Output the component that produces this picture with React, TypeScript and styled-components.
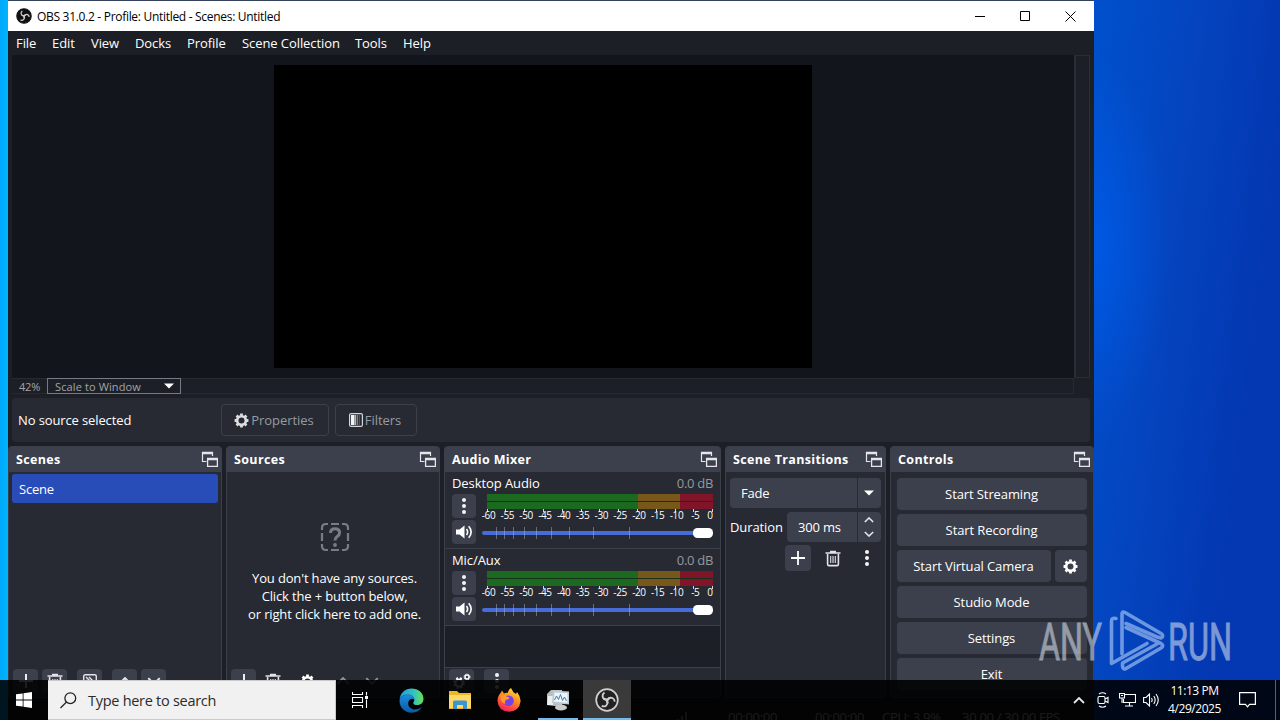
import * as React from "react";
import styled, { createGlobalStyle } from 'styled-components'

const windowBg = '#1d1f26'
const panelBg = '#272a33'
const raisedBg = '#3c404d'
const uiFont = `"Open Sans", "Noto Sans", sans-serif`

const GlobalStyle = createGlobalStyle`
  * {
    box-sizing: border-box;
  }
  body {
    margin: 0;
    overflow: hidden;
    font-family: ${uiFont};
  }
  svg {
    display: block;
    flex: none;
  }
`

const Desktop = styled.div`
  position: relative;
  width: 1280px;
  height: 720px;
  overflow: hidden;
  background:
    linear-gradient(90deg, #00a9fb 0, #00b4ff 8px, transparent 8px),
    radial-gradient(ellipse 80px 190px at 1090px 245px, rgba(0, 92, 235, 0.8), transparent),
    linear-gradient(97deg, #0050cc 0, #0050cc 1090px, #0444be 1190px, #0338b2 1285px);
`

const AppWindow = styled.div`
  position: absolute;
  left: 8px;
  top: 0;
  width: 1086px;
  height: 740px;
  display: flex;
  flex-direction: column;
  color: #fff;
  font-size: 13px;
  background: ${windowBg};
  border-top: 1px solid #33415c;
`

const TitleBar = styled.div`
  display: flex;
  align-items: center;
  height: 30px;
  flex: none;
  padding: 0 1px 0 8px;
  background: #fff;
  color: #000;
`

const TitleText = styled.div`
  flex: 1;
  margin-left: 5px;
  font-size: 12px;
  letter-spacing: -0.3px;
  white-space: nowrap;
`

const WindowButton = styled.div`
  width: 45.3px;
  display: flex;
  justify-content: center;
`

const MenuBar = styled.div`
  display: flex;
  align-items: center;
  height: 24px;
  flex: none;
`

const MenuItem = styled.div<{ $width: number }>`
  width: ${p => p.$width}px;
  padding-left: 8px;
  letter-spacing: -0.08px;
  white-space: nowrap;
`

const Preview = styled.div`
  display: grid;
  grid-template-columns: 1062px 16px;
  grid-template-rows: 323px 16px;
  margin: 0 4px;
  flex: none;
`

const Canvas = styled.div`
  background: #13151c;
  padding: 10px 0 0 262px;
`

const Screen = styled.div`
  width: 538px;
  height: 303px;
  background: #000;
`

const VerticalScroll = styled.div`
  border: 1px solid #2a2d36;
  border-left-width: 2px;
`

const ZoomRow = styled.div`
  display: flex;
  align-items: center;
  color: #a3a5ab;
  font-size: 11px;
  border: 1px solid #272a31;
  border-left: 0;
`

const ZoomLevel = styled.div`
  width: 35px;
  padding-left: 7px;
  letter-spacing: -0.2px;
`

const ZoomSelect = styled.div`
  display: flex;
  align-items: center;
  justify-content: space-between;
  width: 134px;
  height: 16px;
  padding: 0 6px 0 7px;
  border: 1px solid #777a82;
  letter-spacing: 0.12px;
`

const ContextBar = styled.div`
  display: flex;
  align-items: center;
  gap: 6px;
  height: 44px;
  flex: none;
  margin: 4px 4px 4px;
  padding-left: 6px;
  background: ${panelBg};
  border-radius: 4px;
`

const ContextLabel = styled.div`
  width: 197px;
  letter-spacing: -0.12px;
`

const ContextButton = styled.div<{ $width: number }>`
  display: flex;
  align-items: center;
  justify-content: center;
  gap: 2px;
  width: ${p => p.$width}px;
  height: 32px;
  padding-right: 2px;
  color: #989aa1;
  letter-spacing: -0.05px;
  border: 1px solid #3c404b;
  border-radius: 4px;
`

const Docks = styled.div`
  display: grid;
  grid-template-columns: 214px 214px 277px 161px 204px;
  gap: 4px;
  height: 252px;
  flex: none;
`

const DockFrame = styled.div`
  display: flex;
  flex-direction: column;
  min-width: 0;
  background: ${panelBg};
  border: 1px solid #3c404b;
  border-top: 0;
  border-radius: 4px;
`

const DockHeader = styled.div`
  display: flex;
  align-items: center;
  justify-content: space-between;
  height: 26px;
  flex: none;
  padding: 0 3px 0 7px;
  font-weight: 700;
  font-size: 12.5px;
  letter-spacing: 0.35px;
  background: ${raisedBg};
  border-radius: 4px 4px 0 0;
`

const DockBody = styled.div`
  flex: 1;
  display: flex;
  flex-direction: column;
  min-height: 0;
`

const SceneItem = styled.div`
  height: 29px;
  margin: 2px 3px 0;
  padding: 0 7px;
  line-height: 30px;
  letter-spacing: -0.2px;
  background: #284cb8;
  border-radius: 3px;
`

const EmptySources = styled.div`
  flex: 1;
  display: flex;
  flex-direction: column;
  align-items: center;
  padding: 50px 0 0 3px;
  line-height: 18px;
  letter-spacing: -0.15px;
  text-align: center;
  white-space: nowrap;

  svg {
    margin-bottom: 17px;
  }
`

const DockToolbar = styled.div`
  display: flex;
  height: 28px;
  margin-top: auto;
  padding-left: 4px;
`

const ToolButton = styled.div<{ $gap?: number, $flat?: boolean, $dim?: boolean }>`
  display: flex;
  align-items: center;
  justify-content: center;
  width: 25px;
  height: 24px;
  margin-left: ${p => p.$gap ?? 0}px;
  border-radius: 4px;
  background: ${p => p.$flat ? 'transparent' : raisedBg};
  opacity: ${p => p.$dim ? 0.55 : 1};
`

const Channel = styled.div`
  height: 77px;
  flex: none;
  padding: 1px 7px 0;
  border-bottom: 1px solid #3c404b;
`

const ChannelTitle = styled.div`
  display: flex;
  justify-content: space-between;
  height: 21px;
  line-height: 21px;
  letter-spacing: -0.08px;
`

const Muted = styled.span`
  color: #96989e;
  letter-spacing: -0.3px;
`

const ChannelRow = styled.div`
  display: flex;
  gap: 6px;
`

const ChannelButtons = styled.div`
  display: flex;
  flex-direction: column;
  gap: 2px;
`

const SquareButton = styled.div<{ $size?: number }>`
  display: flex;
  align-items: center;
  justify-content: center;
  width: ${p => p.$size ?? 24}px;
  height: ${p => p.$size ?? 24}px;
  background: ${raisedBg};
  border-radius: 4px;
`

const MixerGap = styled.div`
  height: 42px;
  flex: none;
  background: ${windowBg};
  border-bottom: 1px solid #3c404b;
`

const Transitions = styled.div`
  display: flex;
  flex-direction: column;
  gap: 4px;
  padding: 6px 4px 0;
`

const Field = styled.div<{ $width?: number }>`
  display: flex;
  align-items: center;
  width: ${p => p.$width ?? 151}px;
  height: 30px;
  padding-left: 11px;
  background: ${raisedBg};
  border-radius: 4px;
`

const FieldValue = styled.div`
  flex: 1;
  letter-spacing: -0.2px;
  white-space: nowrap;
`

const FieldEnd = styled.div`
  display: flex;
  flex-direction: column;
  align-items: center;
  justify-content: center;
  gap: 8px;
  width: 24px;
  height: 30px;
  padding-right: 1px;
  border-left: 1px solid ${panelBg};
`

const DurationRow = styled.div`
  display: flex;
  align-items: center;
  justify-content: space-between;
  width: 151px;
  letter-spacing: -0.1px;
`

const TransitionTools = styled.div`
  display: flex;
  align-items: center;
  padding-left: 55px;
  margin-top: -1px;
`

const ControlList = styled.div`
  display: flex;
  flex-direction: column;
  gap: 4px;
  padding: 6px 6px 0;
`

const ControlRow = styled.div`
  display: flex;
  gap: 4px;
`

const ControlButton = styled.div<{ $width?: number }>`
  display: flex;
  align-items: center;
  justify-content: center;
  width: ${p => p.$width ?? 190}px;
  height: 32px;
  padding-right: 1px;
  letter-spacing: -0.1px;
  background: ${raisedBg};
  border-radius: 4px;
`

const StatusBar = styled.div`
  display: flex;
  align-items: center;
  height: 38px;
  flex: none;
  padding-left: 668px;
  color: #d0d0d0;
  letter-spacing: -0.3px;
  white-space: nowrap;
`

const StatusItem = styled.div<{ $width: number }>`
  width: ${p => p.$width}px;
  flex: none;
`

const Watermark = styled.div`
  position: absolute;
  left: 1036px;
  top: 606px;
`

const Taskbar = styled.div`
  position: absolute;
  left: 0;
  bottom: 0;
  width: 1280px;
  height: 40px;
  display: flex;
  align-items: stretch;
  color: #fff;
  background: rgba(0, 0, 0, 0.88);
`

const StartButton = styled.div`
  width: 48px;
  display: flex;
  align-items: center;
  justify-content: center;
`

const SearchBox = styled.div`
  display: flex;
  align-items: center;
  gap: 11px;
  width: 288px;
  padding-left: 12px;
  color: #2b2b2b;
  font-size: 14.5px;
  letter-spacing: -0.28px;
  background: #f1f1f1;
  border: 1px solid #c9c9c9;
  border-left: 0;
`

const TaskItem = styled.div<{ $state?: 'open' | 'active' }>`
  display: flex;
  align-items: center;
  justify-content: center;
  width: 48px;
  margin-right: 1px;
  background: ${p => p.$state === 'active' ? '#3a3a3a' : 'transparent'};
  background-image: ${p => p.$state ? 'linear-gradient(#76b9ed, #76b9ed)' : 'none'};
  background-size: ${p => p.$state === 'active' ? '48px' : '40px'} 2px;
  background-position: bottom center;
  background-repeat: no-repeat;

  &:nth-child(3) {
    margin-right: 3px;
  }
`

const Tray = styled.div`
  display: flex;
  align-items: center;
  margin-left: auto;
`

const TrayCell = styled.div<{ $width: number }>`
  display: flex;
  justify-content: center;
  width: ${p => p.$width}px;
`

const Clock = styled.div`
  width: 63px;
  font-size: 12px;
  line-height: 18px;
  letter-spacing: -0.45px;
  text-align: center;
  white-space: nowrap;
`

const ShowDesktop = styled.div`
  width: 5px;
  height: 40px;
  margin-left: 7px;
  border-left: 1px solid #5b6070;
`

function ObsLogo({ size, ring, fill }: { size: number, ring: string, fill: string }) {
  return (
    <svg width={size} height={size} viewBox="0 0 24 24" fill="none">
      <circle cx="12" cy="12" r="10.8" fill={fill} stroke={ring} strokeWidth="1.7" />
      {[0, 120, 240].map(a => (
        <path key={a} transform={`rotate(${a} 12 12)`} d="M9.500 4.500C6.600 6.600 7 10.300 10.200 11.300C12 11.900 13.800 11 14.600 9.300" stroke="#cfcfcf" strokeWidth="1.9" />
      ))}
    </svg>
  )
}

function PopoutIcon() {
  return (
    <svg width="17" height="17" fill="none" stroke="#e6e6ea">
      <path d="M5.500 10.5H1.5V1M11.500 1V5" strokeWidth="1.2" />
      <path d="M1 2H12M6 8H17" strokeWidth="2.4" />
      <path d="M6.6 7V15.4H16.4V7" strokeWidth="1.3" />
    </svg>
  )
}

function GearIcon({ size = 15, color = '#fff' }: { size?: number, color?: string }) {
  return (
    <svg width={size} height={size} viewBox="0 0 16 16" fill="none" stroke={color}>
      <circle cx="8" cy="8" r="4.6" strokeWidth="2.8" />
      {[0, 45, 90, 135].map(a => (
        <path key={a} transform={`rotate(${a} 8 8)`} d="M8 .6V3M8 13V15.4" strokeWidth="3" />
      ))}
    </svg>
  )
}

function FilterIcon() {
  return (
    <svg width="14" height="14" fill="none">
      <rect x=".6" y=".6" width="12.8" height="12.8" rx="1.5" stroke="#d5d6da" strokeWidth="1.2" />
      <path d="M2 2H5.5V12H2Z" fill="#f4f4f4" />
      <path d="M6.5 2V12" stroke="#b9bac0" strokeWidth="1.4" />
      <path d="M8.5 2V12" stroke="#85878f" strokeWidth="1.2" />
      <path d="M10.5 2V12" stroke="#555863" />
    </svg>
  )
}

function TrashIcon() {
  return (
    <svg width="16" height="17" fill="none" stroke="#e3e3e8">
      <path d="M.5 3H15.5M5 1.5H11" strokeWidth="1.7" />
      <path d="M2.6 4V14.2Q2.6 15.6 4 15.6H12Q13.4 15.6 13.4 14.2V4" strokeWidth="1.6" />
      <path d="M5.7 6V13M8 6V13M10.3 6V13" strokeWidth="1.1" />
    </svg>
  )
}

function DotsIcon() {
  return (
    <svg width="4" height="16" fill="#f4f4f4">
      <circle cx="2" cy="2" r="2" />
      <circle cx="2" cy="8" r="2" />
      <circle cx="2" cy="14" r="2" />
    </svg>
  )
}

function PlusIcon() {
  return (
    <svg width="14" height="14" stroke="#fff" strokeWidth="1.8">
      <path d="M7 0V14M0 7H14" />
    </svg>
  )
}

function Chevron({ up, width = 10 }: { up?: boolean, width?: number }) {
  return (
    <svg width={width} height={width / 2 + 1} viewBox="0 0 12 7" fill="none" stroke="#e8e8ec" strokeWidth="1.8">
      <path d={up ? 'M1 6L6 1L11 6' : 'M1 1L6 6L11 1'} />
    </svg>
  )
}

function Arrow() {
  return (
    <svg width="10" height="6" fill="#fff"><path d="M0 .5H10L5 5.5Z" /></svg>
  )
}

function SceneFilterIcon() {
  return (
    <svg width="14" height="14" fill="none" stroke="#e4e4e8" strokeWidth="1.4">
      <rect x=".7" y=".7" width="12.6" height="12.6" rx="1.5" />
      <path d="M3 3L11 11M3 6L8 11M6 3L11 8" />
    </svg>
  )
}

function SpeakerIcon() {
  return (
    <svg width="17" height="14" fill="none">
      <path d="M0 4.5H3.5L8.5 .5V13.5L3.5 9.5H0Z" fill="#fff" />
      <path d="M10.5 4Q12.8 7 10.5 10M12.7 1.3Q17.6 7 12.7 12.7" stroke="#fff" strokeWidth="1.6" />
    </svg>
  )
}

function MissingIcon() {
  return (
    <svg width="30" height="30" fill="none" stroke="#7a7c83" strokeWidth="2.2">
      <path d="M2 8V6Q2 2 6 2H8M11 2H19M22 2H24Q28 2 28 6V8M28 11V19M28 22V24Q28 28 24 28H22M19 28H11M8 28H6Q2 28 2 24V22M2 19V11" />
      <path d="M10.5 11Q10.5 6.8 15 6.8Q19.6 6.8 19.6 10.8Q19.6 13 17.2 14.6Q15 16 15 18.6" strokeWidth="3" />
      <circle cx="15" cy="23" r="1" strokeWidth="1.8" />
    </svg>
  )
}

const levels = [-60, -55, -50, -45, -40, -35, -30, -25, -20, -15, -10, -5, 0]
const notches = [14.5, 22.5, 31.5, 42.5, 54.5, 69.5, 87.5, 111.5, 147.5]

// level meter with its dB scale, and the volume fader under it
function Meter() {
  return (
    <svg width="233" height="50" fontFamily="Open Sans" fontSize="10" fill="#fff">
      <rect x="5" y="0" width="151" height="15" fill="#1b6a20" />
      <rect x="156" y="0" width="42" height="15" fill="#78581a" />
      <rect x="198" y="0" width="33" height="15" fill="#80152a" />
      <path d="M5 7.5H231" stroke="#16301c" />
      {levels.map((db, i) => {
        const x = 5.5 + i * 18.8
        return (
          <g key={db}>
            <path d={`M${Math.round(x) - .5} 15V18`} stroke="#d5d5d8" />
            <text x={db === 0 ? 228 : x + 1} y="25" textAnchor="middle" letterSpacing="-.4">{db}</text>
          </g>
        )
      })}
      <rect x="0" y="37" width="225" height="4" rx="2" fill="#476bd7" />
      {notches.map(x => <path key={x} d={`M${x} 33V45`} stroke="#a9b0c4" strokeOpacity=".5" />)}
      <rect x="211" y="34" width="20" height="10" rx="4.5" />
    </svg>
  )
}

function Dock({ title, children }: { title: string, children?: React.ReactNode }) {
  return (
    <DockFrame>
      <DockHeader>{title}<PopoutIcon /></DockHeader>
      <DockBody>{children}</DockBody>
    </DockFrame>
  )
}

function MixerChannel({ name }: { name: string }) {
  return (
    <Channel>
      <ChannelTitle><span>{name}</span><Muted>0.0 dB</Muted></ChannelTitle>
      <ChannelRow>
        <ChannelButtons>
          <SquareButton><DotsIcon /></SquareButton>
          <SquareButton><SpeakerIcon /></SquareButton>
        </ChannelButtons>
        <Meter />
      </ChannelRow>
    </Channel>
  )
}

function AnyRunLogo() {
  return (
    <Watermark>
      <svg width="200" height="70" fill="none" opacity=".55">
        <g fill="#dfe6f2" stroke="#dfe6f2" strokeWidth=".9" fontFamily="Roboto" fontSize="52">
          <text x="3" y="53.500" textLength="63" lengthAdjust="spacingAndGlyphs">ANY</text>
          <text x="132" y="53.500" textLength="64" lengthAdjust="spacingAndGlyphs">RUN</text>
        </g>
        <g stroke="#c4dcff" strokeWidth="3.600" strokeLinejoin="round" strokeLinecap="round">
          <path d="M80 12.5Q75.5 11.5 75.5 15V57.5L111 37.5" />
          <path d="M86 48V8Q86 5 89 6.5L125 27.5Q128.500 30 125 32L121 31L90 17.500" />
          <path d="M90 21.500L125 37.500Q128.500 39.500 125 42L90 62.500Q86.500 64 86.500 60V57L121 38" />
        </g>
      </svg>
    </Watermark>
  )
}

function EdgeIcon() {
  return (
    <svg width="25" height="25" viewBox="0 0 24 24">
      <defs>
        <linearGradient id="edgeTop" x1="0" x2="1"><stop stopColor="#1b9de2" /><stop offset=".6" stopColor="#35c1c0" /><stop offset="1" stopColor="#6be34c" /></linearGradient>
        <linearGradient id="edgeLow" x1="0" x2="0" y2="1"><stop stopColor="#1c8bdc" /><stop offset="1" stopColor="#0c59a4" /></linearGradient>
      </defs>
      <path d="M.6 11C1.300 4.500 6 .5 12 .5C18.600 .5 23.500 5 23.500 10.500C23.500 14 20.800 16.300 17.500 16.300C15 16.300 13.700 15.300 13.700 14.300C13.700 13.500 14.700 13.200 14.700 11.300C14.700 8.500 12 6.500 8.500 6.500C4.500 6.500 1.600 8.500 .6 11Z" fill="url(#edgeTop)" />
      <path d="M.5 12.500C.5 9 4 6.500 8.500 6.500C12 6.500 14.700 8.500 14.700 11C12.500 9.500 8.800 11 8.800 14.800C8.800 18.500 12.500 21 16.500 20.500C18.800 20.300 20.500 19.200 21.800 18.500C19.500 22.200 16 23.700 12 23.700C5.300 23.700 .5 18.500 .5 12.500Z" fill="url(#edgeLow)" />
    </svg>
  )
}

function ExplorerIcon() {
  return (
    <svg width="22" height="18">
      <path d="M0 0H8L10 2H22V18H0Z" fill="#f0b429" />
      <path d="M0 4H22V17H0Z" fill="#ffd867" />
      <path d="M4 18V11Q4 9.500 5.500 9.500H16.500Q18 9.500 18 11V18H14V14H8V18Z" fill="#3a96cf" />
    </svg>
  )
}

function FirefoxIcon() {
  return (
    <svg width="24" height="24">
      <defs>
        <linearGradient id="fox" x1=".8" y1="0" x2=".3" y2="1"><stop stopColor="#ffe33f" /><stop offset=".45" stopColor="#ff8b21" /><stop offset="1" stopColor="#f5185e" /></linearGradient>
      </defs>
      <path d="M4 4.500L5 2.500L7 5.500Q9 4.500 10.500 5Q12 1 14 0Q15.500 4 19 6L20 4Q24 9 23.500 13.500Q22.500 23 12 23.800Q1 23 .5 12.500Q.5 8 4 4.500Z" fill="url(#fox)" />
      <circle cx="11.500" cy="12.800" r="5.300" fill="#7542e5" />
      <path d="M3.500 7.500Q7 6 9.500 8.500L12.500 9.500Q11.500 12 9 11.800Q7 13.500 8.500 16Q3.500 15 3.500 7.500Z" fill="#ff9a26" />
    </svg>
  )
}

function MonitorIcon() {
  return (
    <svg width="24" height="22">
      <path d="M1 5L5 1H16V18L1 16Z" fill="#b8bfc2" />
      <path d="M2 7H7V16H1Z" fill="#eceff0" />
      <path d="M7 1.500L23 2.500V15.500L6 14Z" fill="#c3cacd" />
      <path d="M8.500 3.500L21.500 4.300V13.700L8 12.600Z" fill="#eef6fc" />
      <path d="M8.500 11L10.500 7L12.500 10.500L14.500 5.500L16.500 11.500L18.500 8L20.500 12" stroke="#397eb0" fill="none" />
      <ellipse cx="15" cy="18.500" rx="6" ry="3" fill="#c9cdd0" />
    </svg>
  )
}

function WindowsLogo() {
  return (
    <svg width="16" height="16" fill="#fff">
      <path d="M0 2.300L6.700 1.400V7.600H0ZM7.500 1.200L16 0V7.600H7.500ZM0 8.400H6.700V14.600L0 13.700ZM7.500 8.400H16V16L7.500 14.800Z" />
    </svg>
  )
}

function SearchIcon() {
  return (
    <svg width="17" height="17" fill="none" stroke="#222" strokeWidth="1.300">
      <circle cx="10.300" cy="6.200" r="5.400" />
      <path d="M6.500 10L.5 16" />
    </svg>
  )
}

function TaskViewIcon() {
  return (
    <svg width="17" height="16" fill="none" stroke="#fff" strokeWidth="1.100">
      <path d="M.5 0V2.500H10.500V0M.5 16V13.500H10.500V16M.5 5.500H10.500V10.500H.5ZM14.500 0V3.500M14.500 7.500V16" />
      <path d="M13 4H16V7H13Z" fill="#fff" stroke="none" />
    </svg>
  )
}

function CameraTrayIcon() {
  return (
    <svg width="12" height="16" fill="none" stroke="#fff" strokeWidth="1.100">
      <rect x="1" y="4.500" width="7" height="7" rx="1.500" />
      <path d="M8 7L11 5.500V10.500L8 9M2 2Q5.500 -.5 9 2M2 14Q5.500 16.500 9 14" />
    </svg>
  )
}

function NetworkIcon() {
  return (
    <svg width="17" height="14" fill="none" stroke="#fff" strokeWidth="1.100">
      <path d="M6 1.500H16.500V9.500H4.500V6M10.500 9.500V13M6 13H14M.5 .5H5.500V5H.5ZM2 2.500H4M3 5V10" />
    </svg>
  )
}

function VolumeTrayIcon() {
  return (
    <svg width="17" height="14" fill="none" stroke="#fff" strokeWidth="1.100">
      <path d="M.6 4.500H3L6.500 1V13L3 9.500H.6ZM8.500 5Q9.800 7 8.500 9M10.800 3Q13.500 7 10.800 11M13 1Q17.500 7 13 13" />
    </svg>
  )
}

const menu: [string, number][] = [
  ['File', 36], ['Edit', 39], ['View', 44], ['Docks', 52],
  ['Profile', 55], ['Scene Collection', 113], ['Tools', 48], ['Help', 44],
]

export default function App() {
  return (
    <Desktop>
      <GlobalStyle />
      <AppWindow>
        <TitleBar>
          <ObsLogo size={16} ring="#111" fill="#111" />
          <TitleText>OBS 31.0.2 - Profile: Untitled - Scenes: Untitled</TitleText>
          <WindowButton><svg width="10" height="10" stroke="#000"><path d="M0 5.500H10" /></svg></WindowButton>
          <WindowButton><svg width="10" height="10" stroke="#000" fill="none"><path d="M.5 .5H9.500V9.500H.5Z" /></svg></WindowButton>
          <WindowButton><svg width="11" height="11" stroke="#000"><path d="M.5 .5L10.500 10.500M10.500 .5L.5 10.500" /></svg></WindowButton>
        </TitleBar>
        <MenuBar>
          {menu.map(([label, width]) => <MenuItem key={label} $width={width}>{label}</MenuItem>)}
        </MenuBar>
        <Preview>
          <Canvas><Screen /></Canvas>
          <VerticalScroll />
          <ZoomRow>
            <ZoomLevel>42%</ZoomLevel>
            <ZoomSelect>Scale to Window<Arrow /></ZoomSelect>
          </ZoomRow>
        </Preview>
        <ContextBar>
          <ContextLabel>No source selected</ContextLabel>
          <ContextButton $width={108}><GearIcon color="#dcdde0" />Properties</ContextButton>
          <ContextButton $width={82}><FilterIcon />Filters</ContextButton>
        </ContextBar>
        <Docks>
          <Dock title="Scenes">
            <SceneItem>Scene</SceneItem>
            <DockToolbar>
              <ToolButton><PlusIcon /></ToolButton>
              <ToolButton $gap={4}><TrashIcon /></ToolButton>
              <ToolButton $gap={10}><SceneFilterIcon /></ToolButton>
              <ToolButton $gap={10}><Chevron up width={14} /></ToolButton>
              <ToolButton $gap={4}><Chevron width={14} /></ToolButton>
            </DockToolbar>
          </Dock>
          <Dock title="Sources">
            <EmptySources>
              <MissingIcon />
              <div>You don't have any sources.</div>
              <div>Click the + button below,</div>
              <div>or right click here to add one.</div>
            </EmptySources>
            <DockToolbar>
              <ToolButton><PlusIcon /></ToolButton>
              <ToolButton $gap={4} $flat><TrashIcon /></ToolButton>
              <ToolButton $gap={10} $flat><GearIcon /></ToolButton>
              <ToolButton $gap={10} $flat $dim><Chevron up width={14} /></ToolButton>
              <ToolButton $gap={4} $flat $dim><Chevron width={14} /></ToolButton>
            </DockToolbar>
          </Dock>
          <Dock title="Audio Mixer">
            <MixerChannel name="Desktop Audio" />
            <MixerChannel name="Mic/Aux" />
            <MixerGap />
            <DockToolbar>
              <ToolButton>
                <svg width="18" height="16" fill="none" stroke="#fff">
                  <circle cx="6" cy="10" r="3.500" strokeWidth="2" />
                  <circle cx="6" cy="10" r="5" strokeWidth="1.500" strokeDasharray="2 2" />
                  <circle cx="14" cy="4" r="2" strokeWidth="1.500" />
                  <circle cx="14" cy="4" r="3" strokeDasharray="1.200 1.200" />
                </svg>
              </ToolButton>
              <ToolButton $gap={10}><DotsIcon /></ToolButton>
            </DockToolbar>
          </Dock>
          <Dock title="Scene Transitions">
            <Transitions>
              <Field>
                <FieldValue>Fade</FieldValue>
                <FieldEnd><Arrow /></FieldEnd>
              </Field>
              <DurationRow>
                <span>Duration</span>
                <Field $width={94}>
                  <FieldValue>300 ms</FieldValue>
                  <FieldEnd><Chevron up /><Chevron /></FieldEnd>
                </Field>
              </DurationRow>
              <TransitionTools>
                <SquareButton $size={26}><PlusIcon /></SquareButton>
                <ToolButton $gap={9} $flat><TrashIcon /></ToolButton>
                <ToolButton $gap={9} $flat><DotsIcon /></ToolButton>
              </TransitionTools>
            </Transitions>
          </Dock>
          <Dock title="Controls">
            <ControlList>
              <ControlButton>Start Streaming</ControlButton>
              <ControlButton>Start Recording</ControlButton>
              <ControlRow>
                <ControlButton $width={154}>Start Virtual Camera</ControlButton>
                <ControlButton $width={32}><GearIcon /></ControlButton>
              </ControlRow>
              <ControlButton>Studio Mode</ControlButton>
              <ControlButton>Settings</ControlButton>
              <ControlButton>Exit</ControlButton>
            </ControlList>
          </Dock>
        </Docks>
        <StatusBar>
          <StatusItem $width={52}><svg width="14" height="12" stroke="#888" strokeWidth="2"><path d="M2 12V8M6 12V5M10 12V1" /></svg></StatusItem>
          <StatusItem $width={87}>00:00:00</StatusItem>
          <StatusItem $width={67}>00:00:00</StatusItem>
          <StatusItem $width={80}>CPU: 3.9%</StatusItem>
          <StatusItem $width={110}>30.00 / 30.00 FPS</StatusItem>
        </StatusBar>
      </AppWindow>
      <AnyRunLogo />
      <Taskbar>
        <StartButton><WindowsLogo /></StartButton>
        <SearchBox><SearchIcon />Type here to search</SearchBox>
        <TaskItem><TaskViewIcon /></TaskItem>
        <TaskItem><EdgeIcon /></TaskItem>
        <TaskItem><ExplorerIcon /></TaskItem>
        <TaskItem><FirefoxIcon /></TaskItem>
        <TaskItem $state="open"><MonitorIcon /></TaskItem>
        <TaskItem $state="active"><ObsLogo size={24} ring="#d0d0d0" fill="#222" /></TaskItem>
        <Tray>
          <TrayCell $width={24}><Chevron up width={12} /></TrayCell>
          <TrayCell $width={24}><CameraTrayIcon /></TrayCell>
          <TrayCell $width={24}><NetworkIcon /></TrayCell>
          <TrayCell $width={24}><VolumeTrayIcon /></TrayCell>
          <Clock>
            <div>11:13 PM</div>
            <div>4/29/2025</div>
          </Clock>
          <TrayCell $width={42}>
            <svg width="17" height="16" fill="none" stroke="#fff" strokeWidth="1.200"><path d="M.6 .6H16.400V12.400H10.500L8.500 14.800L6.500 12.400H.6Z" /></svg>
          </TrayCell>
          <ShowDesktop />
        </Tray>
      </Taskbar>
    </Desktop>
  )
}
